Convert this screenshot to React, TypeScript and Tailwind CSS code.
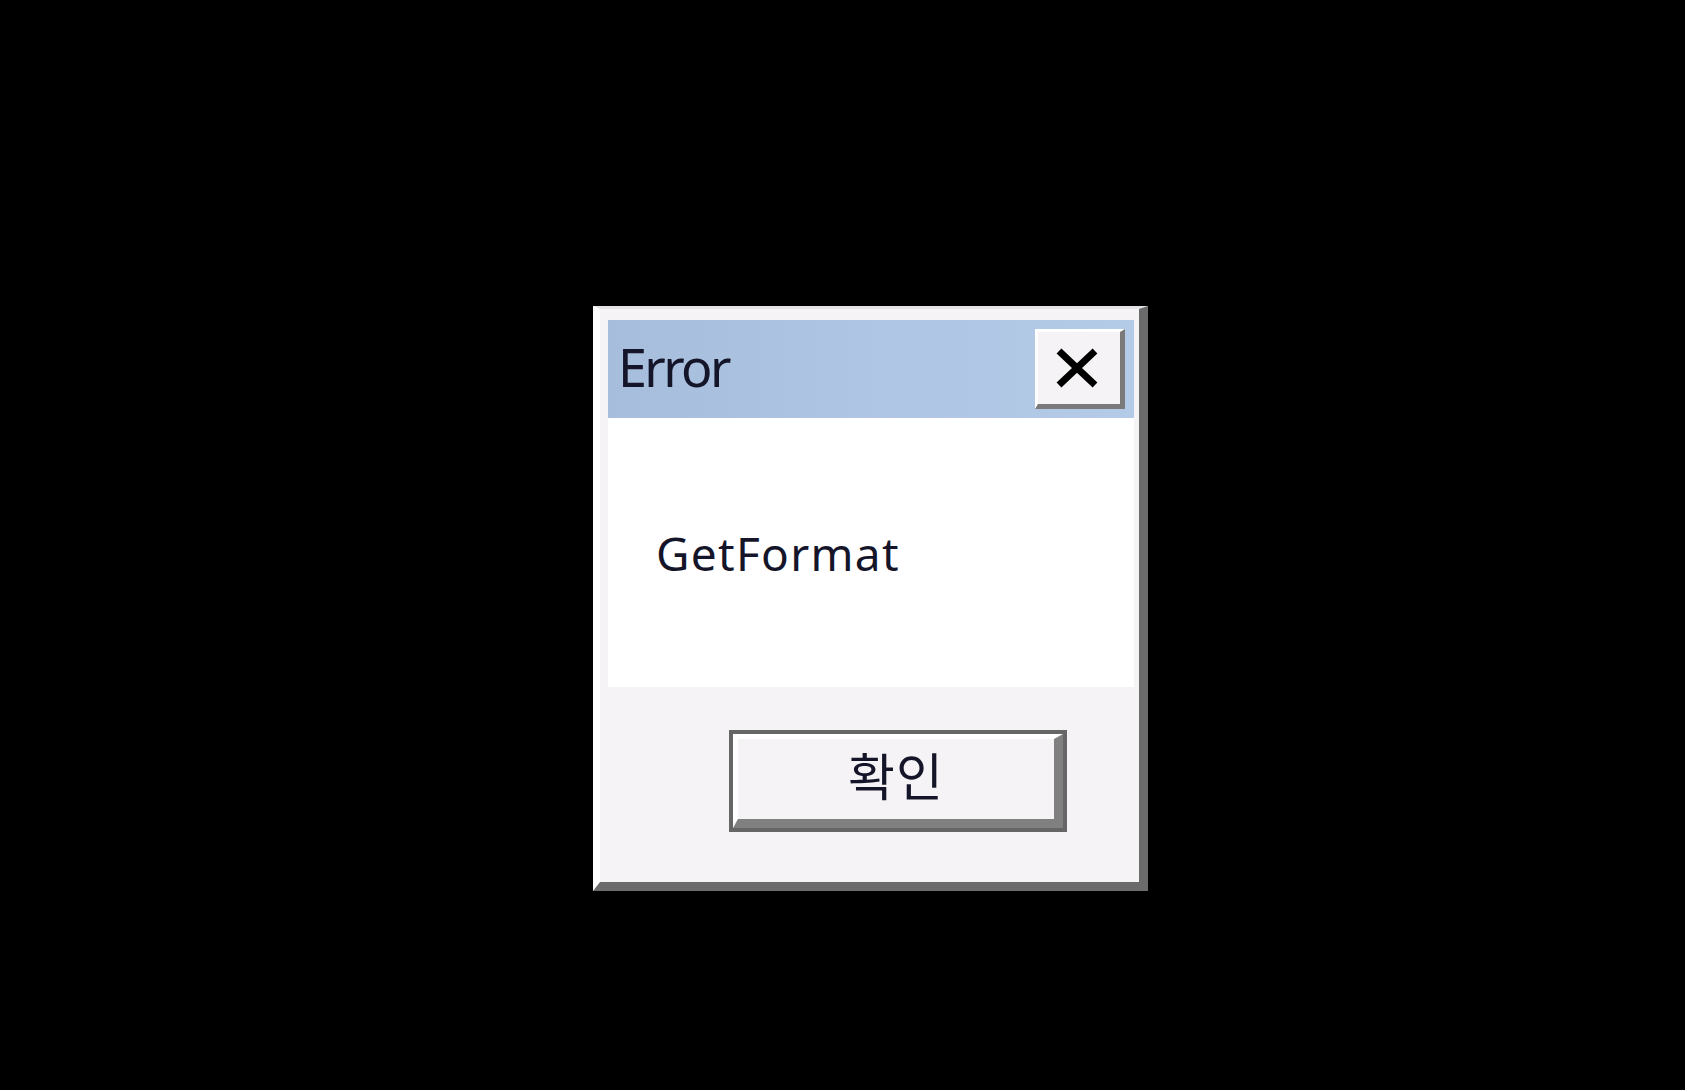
export default function App() {
  return (
    <div className="min-h-[1090px] w-full bg-black pl-[593px] pt-[306px]">
      {/* Dialog frame */}
      <div className="flex h-[585px] w-[555px] flex-col border-l-[7px] border-t-[3px] border-b-[9px] border-r-[9px] border-l-white border-t-[#e4e2e6] border-b-[#6b6b6b] border-r-[#6b6b6b] bg-[#f6f3f6]">
        <div className="flex flex-col pl-[8px] pr-[5px] pt-[11px]">
          {/* Title bar */}
          <div className="flex h-[98px] items-center justify-between bg-gradient-to-r from-[#a6bddc] via-[#aec5e3] to-[#b4cbe8] pl-[10px] pr-[9px]">
            <span className="mt-[-4px] text-[52px] leading-none tracking-[-2.6px] text-[#15152a] [font-family:'Noto_Sans',sans-serif]">
              Error
            </span>
            <button className="flex h-[80px] w-[90px] items-center justify-center border-l-[3px] border-t-[3px] border-b-[5px] border-r-[5px] border-l-white border-t-white border-b-[#7a7a7a] border-r-[#7a7a7a] bg-[#f6f3f6]">
              <svg width="46" height="42" viewBox="0 0 46 42" className="ml-[-4px]">
                <path d="M5 4 L41 38 M41 4 L5 38" stroke="#000" strokeWidth="7" fill="none" />
              </svg>
            </button>
          </div>
          {/* Message area */}
          <div className="h-[269px] bg-white pl-[48px] pt-[112px]">
            <span className="text-[46px] leading-none tracking-[1.3px] text-[#15152a] [font-family:'Noto_Sans',sans-serif]">
              GetFormat
            </span>
          </div>
        </div>
        {/* Button area */}
        <div className="flex flex-1 pl-[129px] pt-[43px]">
          <button className="h-[102px] w-[338px] border-4 border-[#666666]">
            <div className="flex h-full w-full items-center justify-center border-l-[5px] border-t-[5px] border-b-[9px] border-r-[9px] border-l-white border-t-white border-b-[#808080] border-r-[#808080] bg-[#f6f3f6]">
              <span className="mt-[-10px] text-[51px] leading-none tracking-[1px] text-[#15152a] [font-family:'Noto_Sans_CJK_KR','Noto_Sans',sans-serif]">
                확인
              </span>
            </div>
          </button>
        </div>
      </div>
    </div>
  );
}
